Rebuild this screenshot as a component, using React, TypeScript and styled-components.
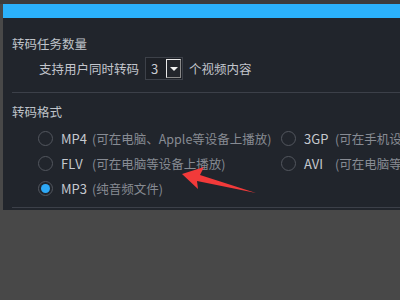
import React, {useState} from "react";
import styled, {createGlobalStyle} from "styled-components";

const GlobalStyle = createGlobalStyle`
  html, body {
    margin: 0;
    padding: 0;
    background: #484848;
  }
  body {
    font-family: "Noto Sans CJK SC", "Noto Sans", sans-serif;
  }
`;

const Screen = styled.div`
  width: 400px;
  height: 300px;
  overflow: hidden;
  background: #484848;
  border-top: 4px solid #3c3c3c;
  box-sizing: border-box;
  padding-left: 3px;
`;

const Panel = styled.div`
  position: relative;
  width: 420px;
  height: 206px;
  background: #21252c;
  display: flex;
  flex-direction: column;
`;

const TitleBar = styled.div`
  height: 14px;
  background: #2bb1fb;
  flex-shrink: 0;
`;

const Body = styled.div`
  padding: 16px 0 0 9px;
  display: flex;
  flex-direction: column;
`;

const SectionTitle = styled.div<{$gap?: number}>`
  font-size: 12.5px;
  line-height: 20px;
  height: 20px;
  color: #bfc3c9;
  margin-top: ${p => p.$gap ?? 0}px;
`;

const CountRow = styled.div`
  display: flex;
  align-items: center;
  gap: 6px;
  height: 23px;
  margin: 3px 0 0 27px;
  font-size: 12.5px;
  color: #c3c6cc;
`;

const Select = styled.div`
  width: 38px;
  height: 23px;
  box-sizing: border-box;
  border: 1px solid #3d4149;
  background: #1d2026;
  display: flex;
  align-items: center;
  justify-content: space-between;
  padding: 0 1px 0 5px;
  color: #c9ccd2;
  font-size: 13px;
`;

const DropButton = styled.div`
  width: 15px;
  height: 19px;
  box-sizing: border-box;
  border-left: 1px solid #e8e8e8;
  border-top: 1px solid #e8e8e8;
  border-right: 1px solid #8a8a8a;
  border-bottom: 1px solid #8a8a8a;
  background: #23262c;
  display: flex;
  align-items: center;
  justify-content: center;

  &::after {
    content: "";
    border-left: 4px solid transparent;
    border-right: 4px solid transparent;
    border-top: 4px solid #f2f2f2;
  }
`;

const Divider = styled.div<{$top: number}>`
  height: 1px;
  background: #3c4049;
  margin-top: ${p => p.$top}px;
`;

const FormatGrid = styled.div`
  display: grid;
  grid-template-columns: 243px 1fr;
  grid-auto-rows: 24px;
  row-gap: 1px;
  margin: 4px 0 0 26px;
`;

const Option = styled.label`
  display: flex;
  align-items: center;
  gap: 8px;
  white-space: nowrap;
  font-size: 12.5px;
  cursor: pointer;
`;

const Radio = styled.span<{$on: boolean}>`
  width: 15px;
  height: 15px;
  box-sizing: border-box;
  border-radius: 50%;
  border: 1.5px solid #52565e;
  display: flex;
  align-items: center;
  justify-content: center;
  flex-shrink: 0;

  &::after {
    content: "";
    width: 9px;
    height: 9px;
    border-radius: 50%;
    background: ${p => (p.$on ? "#2ea9f7" : "transparent")};
  }
`;

const FormatName = styled.span`
  width: 23px;
  font-size: 13px;
  color: #c6c9cf;
`;

const FormatDesc = styled.span`
  color: #878b93;
`;

const Arrow = styled.svg`
  position: absolute;
  left: 0;
  top: -4px;
  pointer-events: none;
`;

const formats = [
    {name: "MP4", desc: "(可在电脑、Apple等设备上播放)"},
    {name: "3GP", desc: "(可在手机设备上播放)"},
    {name: "FLV", desc: "(可在电脑等设备上播放)"},
    {name: "AVI", desc: "(可在电脑等设备上播放)"},
    {name: "MP3", desc: "(纯音频文件)"},
];

export default function App() {
    const [selected, setSelected] = useState("MP3");

    return (
        <>
            <GlobalStyle/>
            <Screen>
                <Panel>
                    <TitleBar/>
                    <Body>
                        <SectionTitle>转码任务数量</SectionTitle>
                        <CountRow>
                            支持用户同时转码
                            <Select>
                                3
                                <DropButton/>
                            </Select>
                            个视频内容
                        </CountRow>
                        <Divider $top={12}/>
                        <SectionTitle $gap={9}>转码格式</SectionTitle>
                        <FormatGrid>
                            {formats.map(f => (
                                <Option key={f.name} onClick={() => setSelected(f.name)}>
                                    <Radio $on={selected === f.name}/>
                                    <FormatName>{f.name}</FormatName>
                                    <FormatDesc>{f.desc}</FormatDesc>
                                </Option>
                            ))}
                        </FormatGrid>
                        <Divider $top={7}/>
                    </Body>
                    <Arrow width="400" height="300" viewBox="0 0 400 300">
                        <polygon points="179,174 201,167 197,175 253,193 194,181 195,189" fill="#f23a3a"/>
                    </Arrow>
                </Panel>
            </Screen>
        </>
    );
}
